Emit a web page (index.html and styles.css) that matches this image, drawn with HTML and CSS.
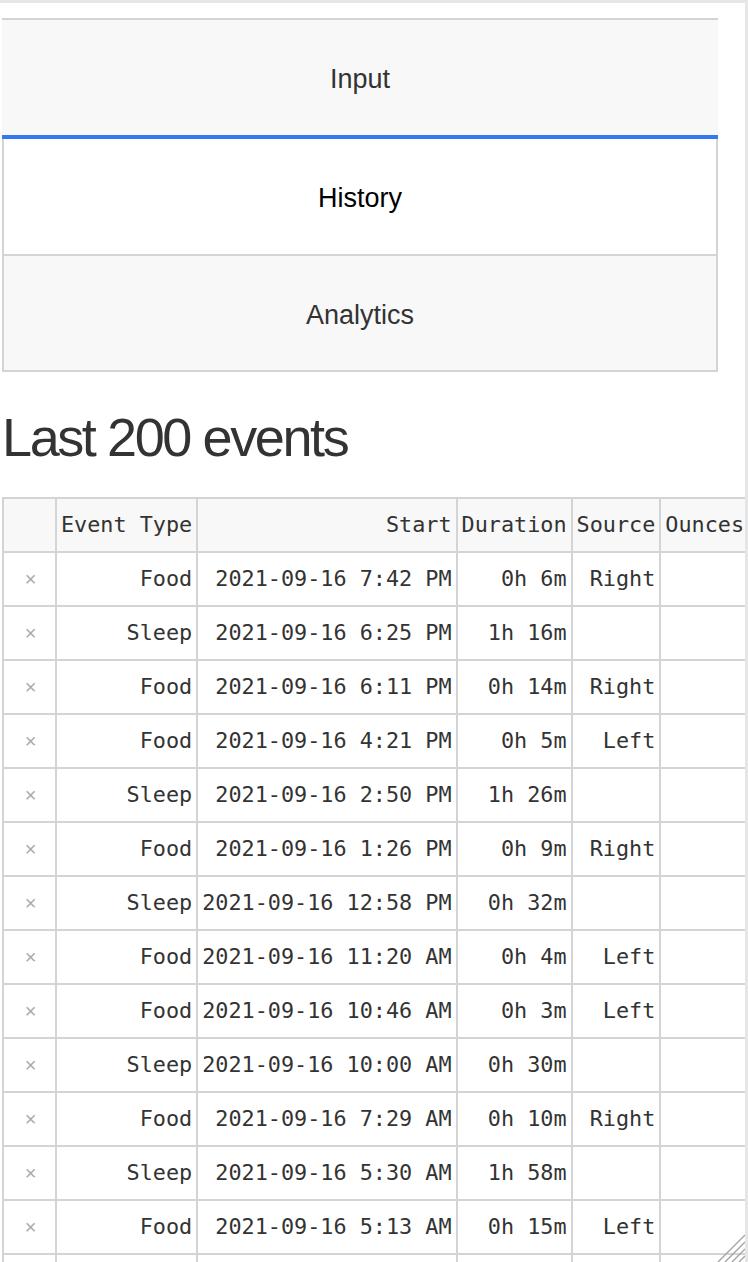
FILE: index.html
```html
<!DOCTYPE html>
<html>
<head>
<meta charset="utf-8">
<link rel="stylesheet" href="styles.css">
</head>
<body>
<div class="frame">
  <div class="tabs">
    <div class="tab tab-input">Input</div>
    <div class="tab tab-history">History</div>
    <div class="tab tab-analytics">Analytics</div>
  </div>
  <h1 class="title">Last 200 events</h1>
  <table class="events">
    <thead>
      <tr><th class="del"></th><th>Event Type</th><th>Start</th><th>Duration</th><th>Source</th><th>Ounces</th></tr>
    </thead>
    <tbody>
      <tr><td class="del">×</td><td>Food</td><td>2021-09-16 7:42 PM</td><td>0h 6m</td><td>Right</td><td></td></tr>
      <tr><td class="del">×</td><td>Sleep</td><td>2021-09-16 6:25 PM</td><td>1h 16m</td><td></td><td></td></tr>
      <tr><td class="del">×</td><td>Food</td><td>2021-09-16 6:11 PM</td><td>0h 14m</td><td>Right</td><td></td></tr>
      <tr><td class="del">×</td><td>Food</td><td>2021-09-16 4:21 PM</td><td>0h 5m</td><td>Left</td><td></td></tr>
      <tr><td class="del">×</td><td>Sleep</td><td>2021-09-16 2:50 PM</td><td>1h 26m</td><td></td><td></td></tr>
      <tr><td class="del">×</td><td>Food</td><td>2021-09-16 1:26 PM</td><td>0h 9m</td><td>Right</td><td></td></tr>
      <tr><td class="del">×</td><td>Sleep</td><td>2021-09-16 12:58 PM</td><td>0h 32m</td><td></td><td></td></tr>
      <tr><td class="del">×</td><td>Food</td><td>2021-09-16 11:20 AM</td><td>0h 4m</td><td>Left</td><td></td></tr>
      <tr><td class="del">×</td><td>Food</td><td>2021-09-16 10:46 AM</td><td>0h 3m</td><td>Left</td><td></td></tr>
      <tr><td class="del">×</td><td>Sleep</td><td>2021-09-16 10:00 AM</td><td>0h 30m</td><td></td><td></td></tr>
      <tr><td class="del">×</td><td>Food</td><td>2021-09-16 7:29 AM</td><td>0h 10m</td><td>Right</td><td></td></tr>
      <tr><td class="del">×</td><td>Sleep</td><td>2021-09-16 5:30 AM</td><td>1h 58m</td><td></td><td></td></tr>
      <tr><td class="del">×</td><td>Food</td><td>2021-09-16 5:13 AM</td><td>0h 15m</td><td>Left</td><td></td></tr>
      <tr><td class="del"></td><td></td><td></td><td></td><td></td><td></td></tr>
    </tbody>
  </table>
  <svg class="grip" width="28" height="28" viewBox="0 0 28 28" aria-hidden="true">
    <line x1="1" y1="28" x2="28" y2="1" />
    <line x1="8" y1="28" x2="28" y2="8" />
    <line x1="15" y1="28" x2="28" y2="15" />
    <line x1="22" y1="28" x2="28" y2="22" />
  </svg>
</div>
</body>
</html>
```

FILE: styles.css
```css
html, body {
  margin: 0;
  padding: 0;
  background: #ffffff;
}

.frame {
  position: relative;
  box-sizing: border-box;
  width: 748px;
  height: 1262px;
  border-top: 3px solid #e6e6e6;
  border-right: 3px solid #e6e6e6;
  padding: 15px 0 0 2px;
  overflow: hidden;
  font-family: "Liberation Sans", Arial, Helvetica, sans-serif;
  color: #333333;
}

.tabs {
  width: 716px;
  box-sizing: border-box;
  border: 2px solid #d4d4d4;
  display: flex;
  flex-direction: column;
}

.tab {
  display: flex;
  align-items: center;
  justify-content: center;
  font-size: 27px;
  color: #333333;
  padding-top: 4px;
}

.tab-input {
  height: 111px;
  background: #f8f8f8;
  border-bottom: 4px solid #3478f6;
  margin: 0 -2px;
}

.tab-history {
  height: 111px;
  background: #ffffff;
  color: #000000;
  border-bottom: 2px solid #d4d4d4;
}

.tab-analytics {
  height: 110px;
  background: #f8f8f8;
}

.title {
  margin: 34px 0 29px 0;
  font-size: 54px;
  line-height: 62px;
  font-weight: 400;
  letter-spacing: -2.4px;
  color: #333333;
}

.events {
  width: max-content;
  border-collapse: collapse;
  border: 2px solid #d4d4d4;
  font-family: "DejaVu Sans Mono", "Liberation Mono", monospace;
  font-size: 21.8px;
  color: #333333;
}

.events th,
.events td {
  border: 2px solid #d4d4d4;
  padding: 0 4px;
  line-height: 52px;
  height: 52px;
  text-align: right;
  white-space: nowrap;
  font-weight: 400;
}

.events th {
  background: #f8f8f8;
}

.events .del {
  padding: 0 3px 0 5px;
  text-align: center;
  color: #aaaaaa;
  font-family: "Liberation Sans", Arial, sans-serif;
  font-size: 20px;
}

.events th.del,
.events td.del {
  width: 43px;
}

.grip {
  position: absolute;
  right: 0;
  bottom: 0;
  stroke: #a8a8a8;
  stroke-width: 1.5;
}
```
